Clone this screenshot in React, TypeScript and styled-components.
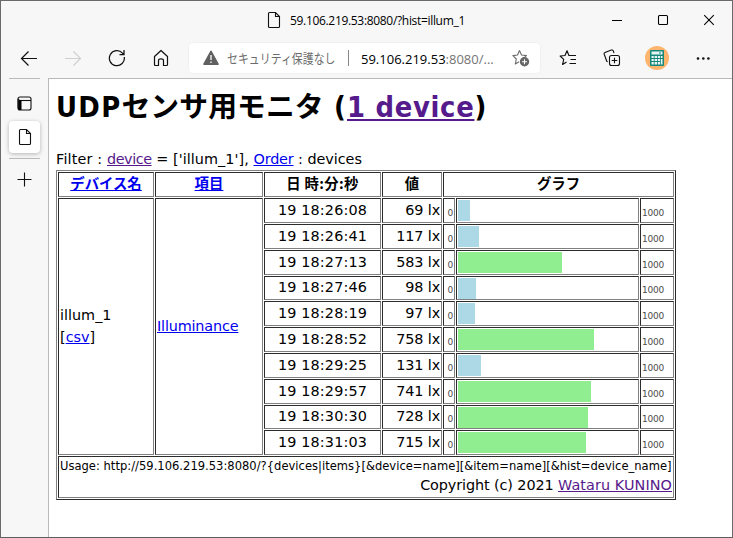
import React from "react";
import styled, { createGlobalStyle } from "styled-components";

const DARK = "#2c2c2c";
const GRAY = "#808080";

const GlobalStyle = createGlobalStyle`
  * { box-sizing: border-box; }
  body { margin: 0; overflow: hidden; }
`;

const Window = styled.div`
  width: 733px;
  height: 538px;
  display: flex;
  flex-direction: column;
  background: #f7f7f7;
  border: 1px solid #6b696b;
  border-bottom-color: #5f5d5e;
  font-family: "Open Sans", "Noto Sans CJK JP", sans-serif;
  color: #000;
`;

const TitleBar = styled.header`
  height: 38px;
  flex: none;
  display: flex;
  align-items: center;
  padding-left: 266px;
`;

const TabTitle = styled.span`
  font-size: 12px;
  line-height: 16px;
  letter-spacing: -0.32px;
  margin-left: 9px;
  padding-top: 1px;
  flex: 1;
  white-space: nowrap;
`;

const CaptionButton = styled.div`
  width: 46px;
  height: 38px;
  display: grid;
  place-items: center;
`;

const Toolbar = styled.div`
  height: 38px;
  flex: none;
  display: flex;
  align-items: center;
  padding-left: 6px;
`;

const ToolButton = styled.div<{ $w: number }>`
  width: ${(p) => p.$w}px;
  height: 38px;
  display: grid;
  place-items: center;
`;

const AddressBar = styled.div`
  width: 351px;
  height: 30px;
  margin: 0 5px 0 6px;
  border-radius: 4px;
  background: #fff;
  box-shadow: 0 0 2px rgba(0, 0, 0, 0.09);
  display: flex;
  align-items: center;
  padding: 0 10px 0 14px;
  font-size: 13px;
  line-height: 18px;
  white-space: nowrap;
`;

const Security = styled.span`
  width: 109px;
  margin-left: 8px;
  color: #6b6b6b;
  font-family: "Noto Sans CJK JP", sans-serif;

  & > span {
    display: inline-block;
    transform: scaleX(0.84);
    transform-origin: 0 50%;
  }
`;

const Separator = styled.i`
  width: 1px;
  height: 16px;
  background: #858585;
  margin: 0 12px 0 12px;
`;

const Address = styled.span`
  flex: 1;
  padding-top: 1px;
  em { font-style: normal; color: #757575; }
`;

const Body = styled.div`
  flex: 1;
  min-height: 0;
  display: flex;
`;

const Sidebar = styled.aside`
  width: 47px;
  flex: none;
  padding: 1px 0 0 8px;
  display: flex;
  flex-direction: column;
`;

const Rule = styled.div<{ $mt?: number }>`
  width: 31px;
  height: 1px;
  margin-top: ${(p) => p.$mt ?? 0}px;
  flex: none;
  background: #b9b9b9;
`;

const SideItem = styled.div<{ $h: number; $active?: boolean }>`
  width: 31px;
  height: ${(p) => p.$h}px;
  flex: none;
  display: grid;
  place-items: center;
  border-radius: 4px;
  background: ${(p) => (p.$active ? "#fff" : "transparent")};
  box-shadow: ${(p) => (p.$active ? "0 1px 4px rgba(0,0,0,.28)" : "none")};
`;

const TabsItem = styled(SideItem)`
  padding-top: 6px;
`;

const Page = styled.main`
  flex: 1;
  margin-top: 1px;
  border: solid #b9b9b9;
  border-width: 1px 0 0 1px;
  background: #fff;
  padding-left: 7px;
  font-family: "DejaVu Sans", "Noto Sans CJK JP", sans-serif;
  font-size: 14.4px;
  line-height: 21.6px;
  white-space: pre;
`;

const Heading = styled.h1`
  margin: 5px 0 0;
  height: 42px;
  font: bold 28.8px/42px "DejaVu Sans Condensed", "DejaVu Sans", "Noto Sans CJK JP", sans-serif;
  letter-spacing: 0.7px;
`;

const Kana = styled.span`
  font-family: "Noto Sans CJK JP", sans-serif;
  letter-spacing: 0.1px;
`;

const Link = styled.a<{ $visited?: boolean }>`
  color: ${(p) => (p.$visited ? "#551a8b" : "#0000ee")};
  text-decoration: underline;
`;

const Track = styled.span<{ $ls: number }>`
  letter-spacing: ${(p) => p.$ls}px;
`;

const Filter = styled.p`
  margin: 23px 0 0;
  height: 21px;
`;

const Table = styled.div`
  width: 620px;
  display: grid;
  grid-template-columns: 96px 108px 117px 60px 12px 183px 34px;
  grid-template-rows: 25px 25px 25px 25px 24px 25px 25px 25px 25px 24px 25px 42px;
  gap: 1px;
  padding: 1px;
  border: 1px solid;
  border-color: ${GRAY} ${DARK} ${DARK} ${GRAY};
`;

const Cell = styled.div<{ $align?: string; $rows?: number; $cols?: number }>`
  grid-row: span ${(p) => p.$rows ?? 1};
  grid-column: span ${(p) => p.$cols ?? 1};
  min-width: 0;
  display: flex;
  flex-direction: column;
  justify-content: center;
  align-items: ${(p) => p.$align ?? "flex-start"};
  padding: 0 1px;
  border: 1px solid;
  border-color: ${DARK} ${GRAY} ${GRAY} ${DARK};
`;

const HeadCell = styled(Cell)`
  padding-bottom: 3px;
  font-family: "Noto Sans CJK JP", sans-serif;
  font-weight: bold;
`;

const ScaleCell = styled(Cell)`
  justify-content: flex-end;
  font-size: 9px;
  line-height: 11px;
  letter-spacing: -0.2px;
  color: #4c4c4c;
  padding-bottom: 3px;
`;

const BarCell = styled(Cell)`
  padding: 1px;
  justify-content: flex-start;
`;

const Bar = styled.div<{ $high: boolean }>`
  height: 21px;
  flex: none;
  background: ${(p) => (p.$high ? "lightgreen" : "lightblue")};
`;

const FootCell = styled(Cell)`
  justify-content: flex-start;
`;

const Usage = styled.div`
  font: 12.8px/18px "DejaVu Sans Condensed", "DejaVu Sans", sans-serif;
  letter-spacing: 0.02px;
`;

const Copyright = styled.div`
  align-self: flex-end;
  line-height: 20px;
`;

const PageIcon = () => (
  <svg width="14" height="18" viewBox="0 0 14 18" fill="none" stroke="#111" strokeWidth="1.1">
    <path d="M2.5 1.5H8.5L12.5 5.5V15.5Q12.5 16.5 11.5 16.5H2.5Q1.5 16.5 1.5 15.5V2.5Q1.5 1.5 2.5 1.5ZM8.5 1.5V5.5H12.5" />
  </svg>
);

const Arrow = ({ forward }: { forward?: boolean }) => (
  <svg width="18" height="18" viewBox="0 0 18 18" fill="none" stroke={forward ? "#cfcfcf" : "#111"} strokeWidth="1.2">
    <path d={forward ? "M1 9.5H16.5M9.5 2.5L16.5 9.5L9.5 16.5" : "M17 9.5H1.5M8.5 2.5L1.5 9.5L8.5 16.5"} />
  </svg>
);

const Reload = () => (
  <svg width="18" height="18" viewBox="0 0 18 18" fill="none" stroke="#111" strokeWidth="1.25">
    <path d="M16.3 8A7.5 7.5 0 1 1 14.5 4.2L16 5.5M16 1V5.5H11.5" />
  </svg>
);

const Home = () => (
  <svg width="18" height="18" viewBox="0 0 18 18" fill="none" stroke="#111" strokeWidth="1.2" strokeLinejoin="round">
    <path d="M2.5 7.5L9 1.5L15.5 7.5V15.5Q15.5 16.5 14.5 16.5H11.5V11.5Q11.5 9.8 9 9.8Q6.5 9.8 6.5 11.5V16.5H3.5Q2.5 16.5 2.5 15.5Z" />
  </svg>
);

const Warning = () => (
  <svg width="16" height="16" viewBox="0 0 16 16">
    <path d="M8 1.3L15 14.2H1Z" fill="#606060" stroke="#606060" strokeWidth="1.6" strokeLinejoin="round" />
    <path d="M8 5V10M8 11.4V13" stroke="#fff" strokeWidth="1.3" />
  </svg>
);

const STAR = "M7.5 1.5L9.5 6L14.5 6.6L10.7 9.9M7.5 1.5L5.5 6L0.9 6.6L4.3 10L3.3 15L7 12.8";

const StarAdd = () => (
  <svg width="18" height="18" viewBox="0 0 18 18" fill="none">
    <path d={STAR} stroke="#6b6b6b" strokeWidth="1.1" strokeLinejoin="round" />
    <circle cx="12.5" cy="12.8" r="4.7" fill="#666" />
    <path d="M12.5 10.3V15.3M10 12.8H15" stroke="#fff" strokeWidth="1.1" />
  </svg>
);

const Favorites = () => (
  <svg width="18" height="18" viewBox="0 0 18 18" fill="none" stroke="#111" strokeWidth="1.15" strokeLinejoin="round">
    <path d="M10.5 6.5H9.9L8 1.7L6 6.5L1.1 7L4.7 10.3L3.6 15.5L7.5 13M10.5 6.5H17M11.5 10.5H17M10.5 14.5H17" />
  </svg>
);

const Collections = () => (
  <svg width="18" height="18" viewBox="0 0 18 18" fill="none" stroke="#111" strokeWidth="1.1">
    <rect x="6.5" y="6.5" width="10" height="10" rx="2" />
    <path d="M11.5 8.7V14.3M8.7 11.5H14.3M4.6 12.8L3.8 12.3L1.2 5.2Q.8 3.9 2 3.4L8.3 1.1Q9.7 .6 10.3 1.9L11 4" />
  </svg>
);

const Avatar = () => (
  <svg width="24" height="24" viewBox="0 0 24 24">
    <circle cx="12" cy="12" r="12" fill="#fdb46d" />
    <rect x="5" y="4" width="14" height="16" rx="1" fill="#16877b" />
    <path d="M6.5 5.5H17.5V8.5H6.5Z" fill="#e6f5f2" />
    <path d="M14 7H16" stroke="#16877b" />
    <path d="M6.5 10H8.8V12H6.5ZM9.6 10H12V12H9.6ZM12.8 10H15V12H12.8ZM15.8 10H17.5V12H15.8ZM6.5 13H8.8V15H6.5ZM9.6 13H12V15H9.6ZM12.8 13H15V15H12.8ZM15.8 13H17.5V18.5H15.8ZM6.5 16H8.8V18.5H6.5ZM9.6 16H12V18.5H9.6ZM12.8 16H15V18.5H12.8Z" fill="#e6f5f2" />
  </svg>
);

const More = () => (
  <svg width="16" height="16" viewBox="0 0 16 16" fill="#111">
    <circle cx="3" cy="8.5" r="1.3" /><circle cx="8.3" cy="8.5" r="1.3" /><circle cx="13.4" cy="8.5" r="1.3" />
  </svg>
);

const Caption = ({ d }: { d: string }) => (
  <svg width="12" height="12" viewBox="0 0 12 12" fill="none" stroke="#000" strokeWidth="1.05">
    <path d={d} />
  </svg>
);

const TabsIcon = () => (
  <svg width="15" height="15" viewBox="0 0 15 15" fill="none" stroke="#111" strokeWidth="1.1">
    <rect x="1" y="1" width="13" height="13" rx="2" />
    <path d="M1 4.5H14" />
    <path d="M1 4H4.5V14H2.5Q1 14 1 12Z" fill="#000" stroke="none" />
    <path d="M1.5 2.8V12" strokeWidth="1.6" />
  </svg>
);

const Plus = () => (
  <svg width="15" height="15" viewBox="0 0 15 15" stroke="#111" strokeWidth="1.1">
    <path d="M7.5 .5V14.5M.5 7.5H14.5" />
  </svg>
);

const readings: [string, number][] = [
  ["19 18:26:08", 69],
  ["19 18:26:41", 117],
  ["19 18:27:13", 583],
  ["19 18:27:46", 98],
  ["19 18:28:19", 97],
  ["19 18:28:52", 758],
  ["19 18:29:25", 131],
  ["19 18:29:57", 741],
  ["19 18:30:30", 728],
  ["19 18:31:03", 715],
];

export default function App() {
  return (
    <Window>
      <GlobalStyle />
      <TitleBar>
        <PageIcon />
        <TabTitle>59.106.219.53:8080/?hist=illum_1</TabTitle>
        <CaptionButton><Caption d="M1 6.5H11" /></CaptionButton>
        <CaptionButton><Caption d="M2.5 1.5H9.5Q10.5 1.5 10.5 2.5V9.5Q10.5 10.5 9.5 10.5H2.5Q1.5 10.5 1.5 9.5V2.5Q1.5 1.5 2.5 1.5Z" /></CaptionButton>
        <CaptionButton><Caption d="M1.2 1.2L10.8 10.8M10.8 1.2L1.2 10.8" /></CaptionButton>
      </TitleBar>
      <Toolbar>
        <ToolButton $w={44}><Arrow /></ToolButton>
        <ToolButton $w={44}><Arrow forward /></ToolButton>
        <ToolButton $w={44}><Reload /></ToolButton>
        <ToolButton $w={44}><Home /></ToolButton>
        <AddressBar>
          <Warning />
          <Security><span>セキュリティ保護なし</span></Security>
          <Separator />
          <Address>59.106.219.53<em>:8080/...</em></Address>
          <StarAdd />
        </AddressBar>
        <ToolButton $w={45}><Favorites /></ToolButton>
        <ToolButton $w={44}><Collections /></ToolButton>
        <ToolButton $w={46}><Avatar /></ToolButton>
        <ToolButton $w={46}><More /></ToolButton>
      </Toolbar>
      <Body>
        <Sidebar>
          <Rule />
          <TabsItem $h={42}><TabsIcon /></TabsItem>
          <SideItem $h={32} $active><PageIcon /></SideItem>
          <Rule $mt={5} />
          <SideItem $h={40}><Plus /></SideItem>
        </Sidebar>
        <Page>
          <Heading>
            <Track $ls={1.3}>UDP</Track><Kana>センサ用モニタ</Kana><Track $ls={1.2}> (</Track><Link $visited>1 device</Link>)
          </Heading>
          <Filter>
            <Track $ls={0.15}>Filter : </Track>
            <Link $visited><Track $ls={-0.45}>device</Track></Link>
            <Track $ls={0.06}> = ['illum_1'], </Track>
            <Link><Track $ls={-0.18}>Order</Track></Link>
            <Track $ls={-0.04}> : devices</Track>
          </Filter>
          <Table>
            <HeadCell $align="center"><Link>デバイス名</Link></HeadCell>
            <HeadCell $align="center"><Link>項目</Link></HeadCell>
            <HeadCell $align="center"><Track $ls={0.35}>日 時:分:秒</Track></HeadCell>
            <HeadCell $align="center">値</HeadCell>
            <HeadCell $align="center" $cols={3}>グラフ</HeadCell>
            <Cell $rows={10}>
              <div>illum_1</div>
              <div>[<Link>csv</Link>]</div>
            </Cell>
            <Cell $rows={10}><Link><Track $ls={-0.17}>Illuminance</Track></Link></Cell>
            {readings.map(([time, lx]) => (
              <React.Fragment key={time}>
                <Cell $align="center"><Track $ls={0.13}>{time}</Track></Cell>
                <Cell $align="flex-end"><Track $ls={-0.15}>{lx} lx</Track></Cell>
                <ScaleCell $align="flex-end">0</ScaleCell>
                <BarCell><Bar $high={lx > 500} style={{ width: Math.round(lx * 0.179) }} /></BarCell>
                <ScaleCell>1000</ScaleCell>
              </React.Fragment>
            ))}
            <FootCell $cols={7}>
              <Usage>{"Usage: http://59.106.219.53:8080/?{devices|items}[&device=name][&item=name][&hist=device_name]"}</Usage>
              <Copyright>
                <Track $ls={-0.1}>Copyright (c) 2021 </Track>
                <Link $visited><Track $ls={0.08}>Wataru KUNINO</Track></Link>
              </Copyright>
            </FootCell>
          </Table>
        </Page>
      </Body>
    </Window>
  );
}
